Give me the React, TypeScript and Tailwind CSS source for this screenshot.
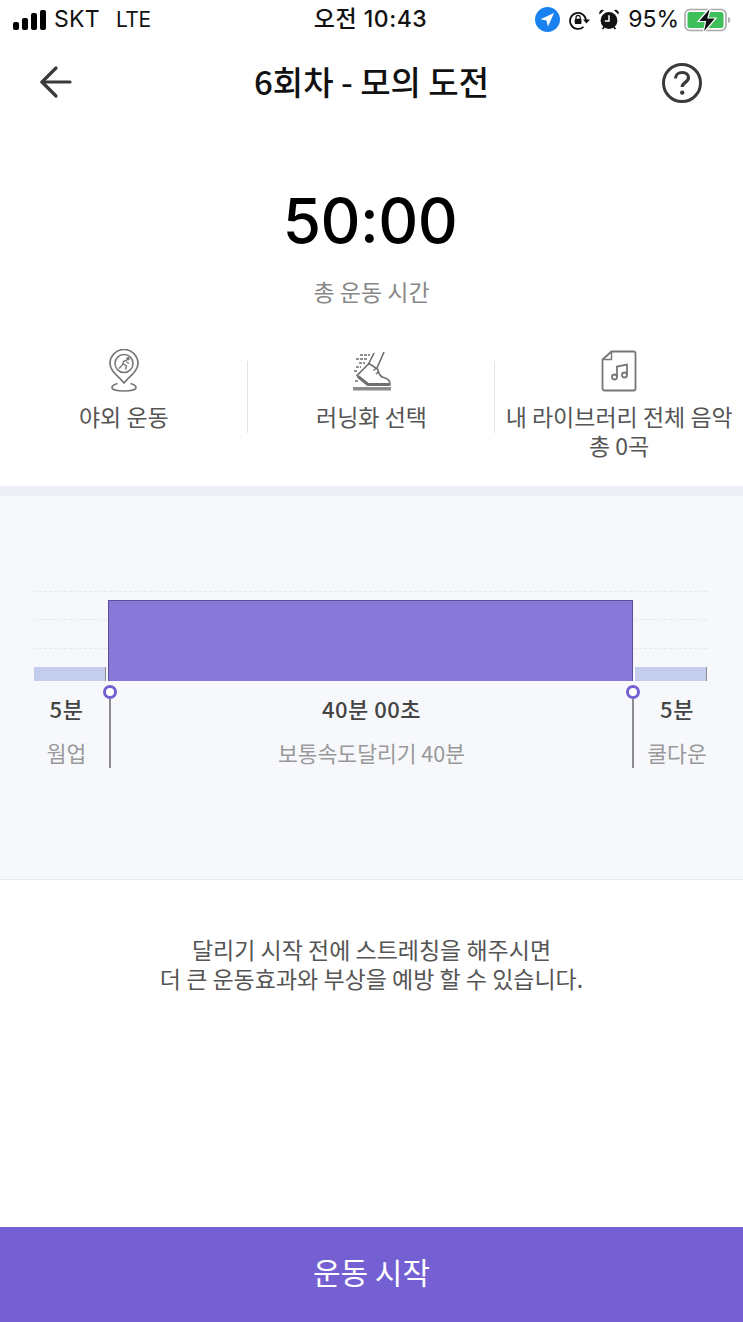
import { ArrowLeft } from "lucide-react";

const KR = "font-['Noto_Sans_CJK_KR','Noto_Sans',sans-serif]";

function SignalBars() {
  return (
    <div className="flex items-end gap-[3px] h-[20px]">
      <div className="w-[6px] h-[8px] rounded-[2px] bg-black" />
      <div className="w-[6px] h-[12px] rounded-[2px] bg-black" />
      <div className="w-[6px] h-[17px] rounded-[2px] bg-black" />
      <div className="w-[6px] h-[20px] rounded-[2px] bg-black" />
    </div>
  );
}

function LocationIcon() {
  return (
    <svg width="25" height="25" viewBox="0 0 25 25">
      <circle cx="12.5" cy="12.5" r="12.5" fill="#1a82f0" />
      <path d="M19 6 L5.5 12.2 L11.5 13.6 L13 19.5 Z" fill="#fff" />
    </svg>
  );
}

function RotationLockIcon() {
  return (
    <svg width="21" height="20" viewBox="0 0 21 20" fill="none">
      <path d="M17 10A8 8 0 1 0 14.500 16.800" stroke="#111" strokeWidth="1.800" />
      <path d="M14 9.400h7l-3.500 4z" fill="#111" />
      <rect x="5.700" y="8.800" width="6.800" height="5.200" rx="1" fill="#111" />
      <path d="M7 9V7.400a2.100 2.100 0 0 1 4.200 0V9" stroke="#111" strokeWidth="1.200" />
    </svg>
  );
}

function AlarmIcon() {
  return (
    <svg width="20" height="21" viewBox="0 0 20 21">
      <circle cx="10" cy="11.500" r="8.400" fill="#111" />
      <path d="M.6 5.400 5 1.200A3.200 3.200 0 0 0 .6 5.400Z M19.400 5.400 15 1.200A3.200 3.200 0 0 1 19.400 5.400Z" fill="#111" />
      <path d="M3.500 20 5.200 18M16.500 20 14.800 18" stroke="#111" strokeWidth="1.800" />
      <path d="M10 6.200V12H5.800" stroke="#fff" strokeWidth="1.500" fill="none" />
    </svg>
  );
}

function BatteryIcon() {
  return (
    <svg width="47" height="28" viewBox="0 0 47 28" fill="none">
      <rect x="1" y="3.500" width="41" height="21" rx="5" stroke="#a8a8a8" strokeWidth="1.600" />
      <rect x="3.500" y="6" width="36" height="16" rx="2.500" fill="#3fbf5a" />
      <path d="M44 11v6c1.500-.4 2.400-1.600 2.400-3S45.500 11.400 44 11Z" fill="#b0b0b0" />
      <path d="M27 .5 14 15.500h7.500L19 27.500 32 12h-8Z" fill="#111" stroke="#fff" strokeWidth="1.200" />
    </svg>
  );
}

function StatusBar() {
  return (
    <div className="h-[40px] pl-[13px] pr-[12px] flex items-center justify-between font-['Inter',sans-serif] text-[23px] text-[#111]">
      <div className="w-[207px] flex items-center -mt-[1px]">
        <SignalBars />
        <span className="ml-[8px] tracking-[0.3px]">SKT</span>
        <span className="ml-[16px] text-[21px] tracking-[-0.5px]">LTE</span>
      </div>
      <div className="font-['Inter','Noto_Sans_CJK_KR',sans-serif] text-[23px] font-medium tracking-[0.5px] -mt-[1px]">오전 10:43</div>
      <div className="w-[210px] flex items-center justify-end -mt-[1px]">
        <LocationIcon />
        <div className="ml-[9px]"><RotationLockIcon /></div>
        <div className="ml-[9px]"><AlarmIcon /></div>
        <span className="ml-[9px]">95%</span>
        <div className="ml-[5px]"><BatteryIcon /></div>
      </div>
    </div>
  );
}

function Header() {
  return (
    <div className="h-[86px] px-[32px] grid grid-cols-[1fr_auto_1fr] items-center">
      <ArrowLeft size={48} strokeWidth={1.6} color="#3a3a3a" className="-mt-[2px]" />
      <h1 className={`${KR} text-[33px] font-medium text-[#111] leading-none -mt-[4px]`}>6회차 - 모의 도전</h1>
      <svg width="42" height="42" viewBox="0 0 42 42" fill="none" className="justify-self-end mr-[8px]">
        <circle cx="21" cy="21" r="18.500" stroke="#3a3a3a" strokeWidth="3" />
        <path d="M14.500 16.500c0-3.600 2.900-6 6.700-6 3.700 0 6.300 2.200 6.300 5.300 0 4.700-6.300 4.500-6.300 9.200" stroke="#3a3a3a" strokeWidth="3.200" />
        <circle cx="21.200" cy="30.600" r="2.200" fill="#3a3a3a" />
      </svg>
    </div>
  );
}

function PinIcon() {
  return (
    <svg width="34" height="44" viewBox="0 0 34 44" fill="none" stroke="#777" strokeWidth="1.700">
      <path d="M17 34C10 26 3 21.500 3 14.500a14 14 0 0 1 28 0C31 21.500 24 26 17 34Z" />
      <circle cx="17" cy="14.500" r="9" strokeWidth="1.500" />
      <path d="M10.500 34.500C6.500 35.500 5 37 5 38.500c0 2.200 5.400 3.500 12 3.500s12-1.300 12-3.500c0-1.500-1.500-3-5.500-4" />
      <path d="M12 19.500l3.500-3.500 1-3.500 3.500-1.500M16.500 15l3 2-1 3.500M19.500 13l2.500 1.500" strokeWidth="1.400" />
      <circle cx="21" cy="9.800" r="0.900" fill="#777" />
    </svg>
  );
}

function ShoeIcon() {
  return (
    <svg width="40" height="42" viewBox="0 0 40 42" fill="none" stroke="#6e6e6e" strokeWidth="1.600">
      <path d="M22 3 16 15M32 2 25 18" />
      <path d="M17 13.500 5 25.500 15.500 35H38c.5-4-2-6.500-6.500-7.500-3.500-.8-5-4.500-6-8.500z" />
      <path d="M6 26.500 16 34.500H37.500" strokeWidth="3" />
      <path d="M21.500 20.500l3-2.500M24 24l3-2.500" />
      <path d="M8 5h10M4 9h12M7 13h6M4 17h5M2 21h3M3 31h4" strokeWidth="1.300" strokeDasharray="3 1" />
      <rect x="1" y="37" width="38" height="3.500" fill="#8c8c8c" stroke="none" />
    </svg>
  );
}

function MusicFileIcon() {
  return (
    <svg width="36" height="42" viewBox="0 0 36 42" fill="none" stroke="#777" strokeWidth="1.800">
      <path d="M10.500 1.500h22a2 2 0 0 1 2 2v35a2 2 0 0 1-2 2h-29a2 2 0 0 1-2-2V9.500z" />
      <path d="M10.500 1.500v8h-8" strokeWidth="1.500" />
      <circle cx="13.500" cy="27" r="2.500" />
      <circle cx="23.500" cy="25" r="2.500" />
      <path d="M16 27V16.500l10-2V25" />
    </svg>
  );
}

function OptionCell({ icon, lines, divider }: { icon: React.ReactNode; lines: string[]; divider?: boolean }) {
  return (
    <div className="relative flex-1 min-w-0 flex flex-col items-center">
      <div className="h-[44px] flex items-center justify-center">{icon}</div>
      <div className={`${KR} mt-[9px] text-[23px] leading-[29px] text-[#555] text-center whitespace-nowrap`}>
        {lines.map((line) => (
          <div key={line}>{line}</div>
        ))}
      </div>
      {divider && <div className="absolute right-0 top-[12px] h-[72px] w-px bg-[#e3e3e6]" />}
    </div>
  );
}

function Marker() {
  return (
    <div className="w-[14px] shrink-0 flex flex-col items-center">
      <div className="w-[14px] h-[14px] rounded-full border-[3px] border-[#7460d2] bg-white" />
      <div className="w-[2px] h-[69px] bg-[#8c8c90]" />
    </div>
  );
}

function SideLabel({ time, name, className }: { time: string; name: string; className: string }) {
  return (
    <div className={`${KR} shrink-0 text-center ${className}`}>
      <div className="mt-[9px] text-[22px] leading-[28px] font-medium tracking-[0.5px] text-[#444]">{time}</div>
      <div className="mt-[17px] text-[21.500px] leading-[28px] text-[#999]">{name}</div>
    </div>
  );
}

function Chart() {
  return (
    <div className="h-[384px] bg-[#f7f8fc] border-b border-[#e9eaef] pt-[95px]">
      <div className="relative ml-[34px] w-[673px] h-[90px] flex items-end">
        <div className="absolute inset-x-0 top-0 border-t border-dashed border-[#e4e8f4]" />
        <div className="absolute inset-x-0 top-[28px] border-t border-dashed border-[#e4e8f4]" />
        <div className="absolute inset-x-0 top-[57px] border-t border-dashed border-[#e4e8f4]" />
        <div className="relative w-[72px] h-[14px] bg-[#c4cdee] border-r border-[#8c8c90]" />
        <div className="relative ml-[2px] w-[525px] h-[81px] bg-[#8878d8] border border-[#5d4f9e] border-b-0" />
        <div className="relative ml-[2px] w-[72px] h-[14px] bg-[#c4cdee] border-r border-[#8c8c90]" />
      </div>
      <div className="ml-[34px] flex mt-[4px]">
        <SideLabel time="5분" name="웜업" className="w-[65px]" />
        <div className="ml-[4px]"><Marker /></div>
        <SideLabel time="40분 00초" name="보통속도달리기 40분" className="w-[509px]" />
        <Marker />
        <SideLabel time="5분" name="쿨다운" className="w-[74px]" />
      </div>
    </div>
  );
}

export default function App() {
  return (
    <div className="w-[743px] h-[1322px] flex flex-col bg-white overflow-hidden">
      <StatusBar />
      <Header />

      <div className="flex flex-col items-center pt-[57px]">
        <div className="mr-[3px] font-['Inter',sans-serif] text-[62px] leading-[76px] tracking-[-0.5px] font-medium text-black">50:00</div>
        <div className={`${KR} mt-[18px] text-[23px] leading-[28px] text-[#888]`}>총 운동 시간</div>
      </div>

      <div className="mt-[44px] h-[137px] flex">
        <OptionCell icon={<PinIcon />} lines={["야외 운동"]} divider />
        <OptionCell icon={<ShoeIcon />} lines={["러닝화 선택"]} divider />
        <OptionCell icon={<MusicFileIcon />} lines={["내 라이브러리 전체 음악", "총 0곡"]} />
      </div>

      <div className="h-[10px] bg-[#eeeff6]" />
      <Chart />

      <div className={`${KR} flex-1 pt-[55px] text-center text-[23px] leading-[29px] text-[#555]`}>
        <p>달리기 시작 전에 스트레칭을 해주시면</p>
        <p>더 큰 운동효과와 부상을 예방 할 수 있습니다.</p>
      </div>

      <button className={`${KR} h-[95px] pb-[6px] bg-[#7460d2] text-white text-[30px]`}>운동 시작</button>
    </div>
  );
}
